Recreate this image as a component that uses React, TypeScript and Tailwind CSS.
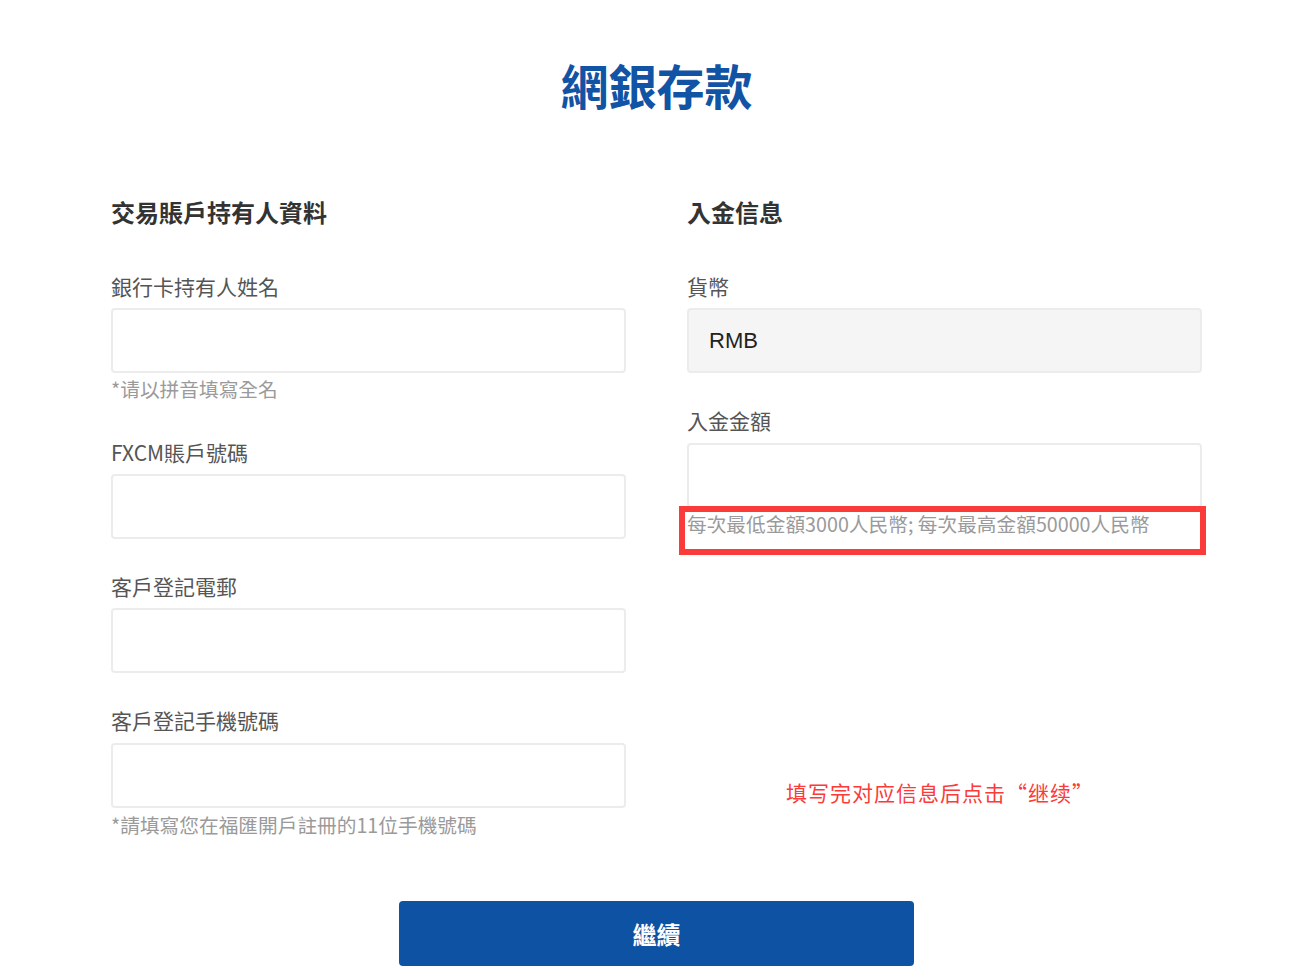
import React from "react";

const cjk = { fontFamily: '"Noto Sans CJK TC", "Noto Sans CJK SC", sans-serif' };

function Label({ children }: { children: React.ReactNode }) {
  return <div className="text-[21px] leading-[30px] text-[#555555]">{children}</div>;
}

function Input({ filled, value }: { filled?: boolean; value?: string }) {
  return (
    <div
      className={`mt-[7px] h-[65px] rounded-[4px] border-2 border-[#ececec] flex items-center pl-[20px] ${
        filled ? "bg-[#f5f5f5]" : "bg-white"
      }`}
    >
      {value && (
        <span className="text-[22px] text-[#222222]" style={{ fontFamily: '"Liberation Sans", Arial, sans-serif' }}>
          {value}
        </span>
      )}
    </div>
  );
}

function Hint({ children, className = "" }: { children: React.ReactNode; className?: string }) {
  return <div className={`text-[19.7px] leading-[28px] text-[#9a9a9a] whitespace-nowrap ${className}`}>{children}</div>;
}

export default function App() {
  return (
    <div className="min-h-screen bg-white" style={cjk}>
      <div className="w-[1091px] ml-[111px] pt-[54px]">
        <h1 className="text-center text-[48px] leading-[60px] font-bold text-[#1153a5]">網銀存款</h1>
        <div className="grid grid-cols-2 gap-x-[61px] mt-[81px]">
          <div>
            <h2 className="text-[24px] leading-[34px] font-bold text-[#333333]">交易賬戶持有人資料</h2>
            <div className="mt-[42px]">
              <Label>銀行卡持有人姓名</Label>
              <Input />
              <Hint className="mt-[2px]">*请以拼音填寫全名</Hint>
            </div>
            <div className="mt-[34px]">
              <Label>FXCM賬戶號碼</Label>
              <Input />
            </div>
            <div className="mt-[32px]">
              <Label>客戶登記電郵</Label>
              <Input />
            </div>
            <div className="mt-[32px]">
              <Label>客戶登記手機號碼</Label>
              <div className="mt-[8px] h-[65px] rounded-[4px] border-2 border-[#ececec] bg-white" />
              <Hint className="mt-[3px]">*請填寫您在福匯開戶註冊的11位手機號碼</Hint>
            </div>
          </div>
          <div>
            <h2 className="text-[24px] leading-[34px] font-bold text-[#333333]">入金信息</h2>
            <div className="mt-[42px]">
              <Label>貨幣</Label>
              <Input filled value="RMB" />
            </div>
            <div className="mt-[32px]">
              <Label>入金金額</Label>
              <div className="mt-[8px] h-[65px] rounded-[4px] border-2 border-[#ececec] bg-white" />
              <div className="relative mt-[2px]">
                <Hint>每次最低金額3000人民幣; 每次最高金額50000人民幣</Hint>
                <div className="absolute left-[-8px] top-[-4px] w-[527px] h-[49px] border-[6px] border-[#fb3a3a]" />
              </div>
            </div>
            <div className="mt-[239px] ml-[99px] text-[21px] leading-[30px] tracking-[1px] text-[#fb3a3a] whitespace-nowrap">
              填写完对应信息后点击“继续”
            </div>
          </div>
        </div>
        <div className="flex justify-center mt-[62px]">
          <button className="w-[515px] h-[65px] rounded-[4px] bg-[#0e52a3] text-white text-[24px] font-bold">
            繼續
          </button>
        </div>
      </div>
    </div>
  );
}
